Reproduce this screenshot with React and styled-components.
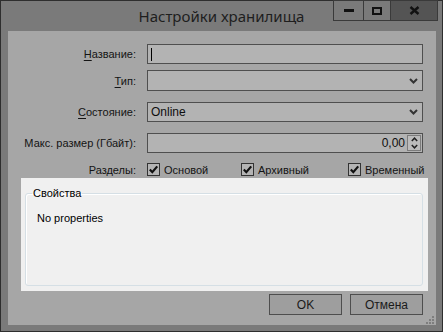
import styled, { createGlobalStyle } from "styled-components"

const Global = createGlobalStyle`
  body {
    margin: 0;
    background: #ffffff;
  }
`

export default function App() {
  return (
    <>
      <Global />
      <Janela>
        <BarraTitulo>
          <Titulo>Настройки хранилища</Titulo>
          <Controles>
            <BotaoJanela $w={29}><Minimizar /></BotaoJanela>
            <BotaoJanela $w={26}><Maximizar /></BotaoJanela>
            <BotaoJanela $w={46} $fechar>
              <svg width="11" height="9" viewBox="0 0 11 9">
                <path d="M1.5 1 L9.5 8 M9.5 1 L1.5 8" stroke="#111" strokeWidth="2.4" />
              </svg>
            </BotaoJanela>
          </Controles>
        </BarraTitulo>

        <Cliente>
          <Linha $mt={13}>
            <Rotulo><u>Н</u>азвание:</Rotulo>
            <Caixa $h={20}><Cursor /></Caixa>
          </Linha>
          <Linha $mt={6}>
            <Rotulo><u>Т</u>ип:</Rotulo>
            <Caixa $h={21}>
              <Texto />
              <Seta />
            </Caixa>
          </Linha>
          <Linha $mt={11}>
            <Rotulo><u>С</u>остояние:</Rotulo>
            <Caixa $h={20}>
              <Texto>Online</Texto>
              <Seta />
            </Caixa>
          </Linha>
          <Linha $mt={11}>
            <Rotulo>Макс. размер (Гбайт):</Rotulo>
            <Caixa $h={20}>
              <Texto $direita>0,00</Texto>
              <Spin>
                <SpinMetade>
                  <svg width="7" height="5" viewBox="0 0 7 5"><path d="M0.8 4 L3.5 1.2 L6.2 4" stroke="#222" strokeWidth="1.5" fill="none" /></svg>
                </SpinMetade>
                <SpinMetade>
                  <svg width="7" height="5" viewBox="0 0 7 5"><path d="M0.8 1 L3.5 3.8 L6.2 1" stroke="#222" strokeWidth="1.5" fill="none" /></svg>
                </SpinMetade>
              </Spin>
            </Caixa>
          </Linha>
          <Linha $mt={10}>
            <Rotulo>Разделы:</Rotulo>
            <Opcoes>
              <Opcao><Marca /> Основой</Opcao>
              <Opcao><Marca /> Архивный</Opcao>
              <Opcao><Marca /> Временный</Opcao>
            </Opcoes>
          </Linha>

          <Painel>
            <Grupo>
              <Legenda>Свойства</Legenda>
              <Vazio>No properties</Vazio>
            </Grupo>
          </Painel>

          <Rodape>
            <Botao>OK</Botao>
            <Botao>Отмена</Botao>
          </Rodape>

          <Grip>
            <svg width="8" height="8" viewBox="0 0 8 8">
              {[[6, 0], [3, 3], [6, 3], [0, 6], [3, 6], [6, 6]].map(([x, y]) => (
                <rect key={x + "-" + y} x={x} y={y} width="2" height="2" fill="#7e7e7e" />
              ))}
            </svg>
          </Grip>
        </Cliente>
      </Janela>
    </>
  )
}

function Minimizar() {
  return <svg width="10" height="4" viewBox="0 0 10 4"><rect x="0" y="0" width="10" height="3" fill="#111" /></svg>
}

function Maximizar() {
  return (
    <svg width="10" height="8" viewBox="0 0 10 8">
      <rect x="1" y="1" width="8" height="6" fill="none" stroke="#111" strokeWidth="2" />
    </svg>
  )
}

function Seta() {
  return (
    <SetaBox>
      <svg width="9" height="6" viewBox="0 0 9 6">
        <path d="M1 1 L4.5 4.5 L8 1" stroke="#333" strokeWidth="2" fill="none" />
      </svg>
    </SetaBox>
  )
}

function Marca() {
  return (
    <MarcaBox>
      <svg width="11" height="11" viewBox="0 0 11 11">
        <path d="M1.8 5.6 L4.3 8.2 L9.2 2.4" stroke="#111" strokeWidth="2.2" fill="none" />
      </svg>
    </MarcaBox>
  )
}

const Janela = styled.div`
  width: 443px;
  height: 332px;
  box-sizing: border-box;
  border: 1px solid #2e2e2e;
  background: #7a7a7a;
  display: flex;
  flex-direction: column;
  padding: 0 6px 6px 7px;
`

const BarraTitulo = styled.div`
  height: 30px;
  display: grid;
  grid-template-columns: 1fr auto 1fr;
  margin: 0 -6px 0 -7px;
`

const Titulo = styled.div`
  grid-column: 2;
  font-family: "Noto Sans", "Open Sans", sans-serif;
  font-size: 15px;
  line-height: 30px;
  color: #1e1e1e;
  white-space: nowrap;
`

const Controles = styled.div`
  grid-column: 3;
  justify-self: end;
  align-self: start;
  display: flex;
  margin: -1px 4px 0 0;
  border: 1px solid #3a3a3a;
  height: 21px;
  box-sizing: border-box;
`

const BotaoJanela = styled.div`
  width: ${(p) => p.$w}px;
  display: flex;
  align-items: center;
  justify-content: center;
  background: ${(p) => (p.$fechar ? "#545454" : "#7a7a7a")};
  & + & {
    border-left: 1px solid #3a3a3a;
  }
`

const Cliente = styled.div`
  flex: 1;
  position: relative;
  background: #a6a6a6;
  display: flex;
  flex-direction: column;
  font-family: "Liberation Sans", Arial, sans-serif;
  font-size: 11px;
  color: #141414;
`

const Linha = styled.div`
  display: grid;
  grid-template-columns: 128px 276px;
  column-gap: 11px;
  align-items: center;
  margin-top: ${(p) => p.$mt}px;
`

const Rotulo = styled.div`
  text-align: right;
  white-space: nowrap;
  u {
    text-decoration-thickness: 1px;
    text-underline-offset: 2px;
  }
`

const Caixa = styled.div`
  height: ${(p) => p.$h}px;
  box-sizing: border-box;
  border: 1px solid #4f4f4f;
  background: #b3b3b3;
  display: flex;
  align-items: center;
  padding: 0 1px 0 3px;
`

const Cursor = styled.div`
  width: 1px;
  height: 13px;
  background: #000;
`

const Texto = styled.div`
  flex: 1;
  font-size: 12px;
  text-align: ${(p) => (p.$direita ? "right" : "left")};
  padding-right: ${(p) => (p.$direita ? "2px" : "0")};
  color: #0e0e0e;
`

const SetaBox = styled.div`
  width: 14px;
  display: flex;
  justify-content: center;
  margin-right: 1px;
`

const Spin = styled.div`
  width: 14px;
  height: 16px;
  display: flex;
  flex-direction: column;
  border: 1px solid #7c7c7c;
  background: #bcbcbc;
  box-sizing: border-box;
`

const SpinMetade = styled.div`
  flex: 1;
  display: flex;
  align-items: center;
  justify-content: center;
`

const Opcoes = styled.div`
  display: grid;
  grid-template-columns: 94px 107px auto;
`

const Opcao = styled.div`
  display: flex;
  align-items: center;
  gap: 4px;
  white-space: nowrap;
  height: 13px;
`

const MarcaBox = styled.div`
  width: 13px;
  height: 13px;
  box-sizing: border-box;
  border: 1px solid #333;
  background: #b4b4b4;
  display: flex;
  align-items: center;
  justify-content: center;
`

const Painel = styled.div`
  margin: 2px 8px 0 13px;
  height: 113px;
  box-sizing: border-box;
  background: #f0f0f0;
  padding: 9px 5px 5px 4px;
  display: flex;
`

const Grupo = styled.fieldset`
  flex: 1;
  margin: 0;
  padding: 12px 10px 0 11px;
  border: 1px solid #d5dfe5;
  border-radius: 3px;
  box-shadow: inset 1px 1px 0 #ffffff;
  min-width: 0;
`

const Legenda = styled.legend`
  padding: 0 1px;
  margin-left: -5px;
  line-height: 13px;
  color: #000;
`

const Vazio = styled.div`
  line-height: 13px;
  color: #000;
`

const Rodape = styled.div`
  display: flex;
  justify-content: flex-end;
  gap: 8px;
  margin: 3px 13px 0 0;
`

const Botao = styled.div`
  width: 73px;
  height: 21px;
  box-sizing: border-box;
  border: 1px solid #4e4e4e;
  background: #9e9e9e;
  display: flex;
  align-items: center;
  justify-content: center;
  font-size: 12px;
  color: #1a1a1a;
`

const Grip = styled.div`
  position: absolute;
  right: 2px;
  bottom: 1px;
  line-height: 0;
`
